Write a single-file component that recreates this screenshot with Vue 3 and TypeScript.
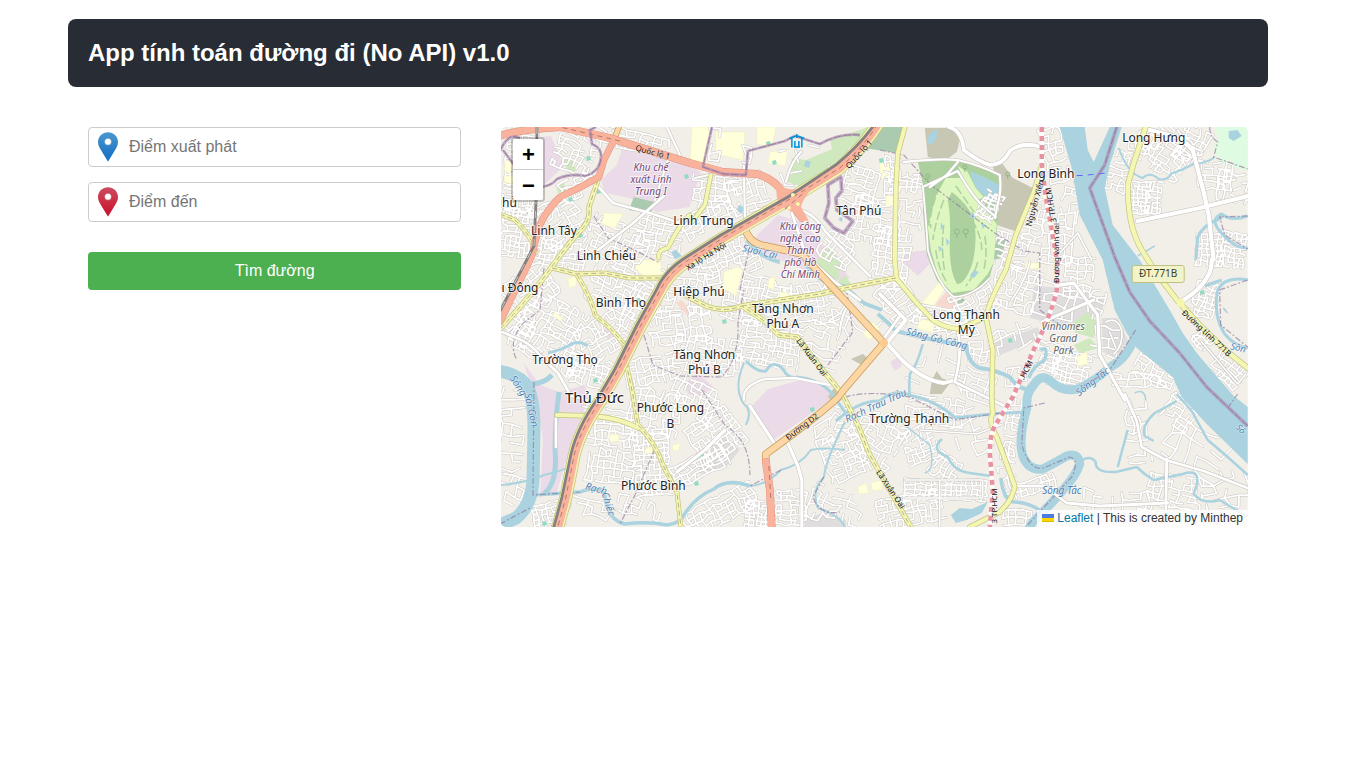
<script setup lang="ts">
import { ref } from 'vue'

interface Block { x: number; y: number; w: number; h: number; a: number; s: number; d?: number }
interface Shape { d: string; c: string }
interface Line { d: string; w: number }
interface Label { t: string; x: number; y: number; r?: number; s?: number; k?: string }

const start = ref('')
const end = ref('')

let seed = 71
const rnd = (): number => {
  seed = (seed * 16807) % 2147483647
  return seed / 2147483647
}

// Local streets: a jittered grid of short segments inside a rotated block
const streets = (b: Block): string => {
  const a = (b.a * Math.PI) / 180
  const c = Math.cos(a)
  const s = Math.sin(a)
  const keep = b.d ?? 0.76
  const nx = Math.max(1, Math.round(b.w / b.s))
  const ny = Math.max(1, Math.round(b.h / b.s))
  const pts: string[][] = []
  for (let j = 0; j <= ny; j++) {
    const row: string[] = []
    for (let i = 0; i <= nx; i++) {
      const u = (i / nx - 0.5) * b.w + (rnd() - 0.5) * b.s * 0.5
      const v = (j / ny - 0.5) * b.h + (rnd() - 0.5) * b.s * 0.5
      row.push(`${(b.x + u * c - v * s).toFixed(1)} ${(b.y + u * s + v * c).toFixed(1)}`)
    }
    pts.push(row)
  }
  let d = ''
  for (let j = 0; j <= ny; j++) {
    for (let i = 0; i <= nx; i++) {
      if (i < nx && rnd() < keep) d += `M${pts[j][i]}L${pts[j][i + 1]}`
      if (j < ny && rnd() < keep - 0.12) d += `M${pts[j][i]}L${pts[j + 1][i]}`
    }
  }
  return d
}

const blocks: Block[] = [
  { x: 520, y: 170, w: 30, h: 90, a: 5, s: 5 }, { x: 575, y: 152, w: 40, h: 42, a: 22, s: 6 },
  { x: 519, y: 232, w: 34, h: 50, a: 8, s: 5 }, { x: 560, y: 222, w: 44, h: 46, a: -30, s: 6 },
  { x: 578, y: 187, w: 34, h: 20, a: -25, s: 6 }, { x: 616, y: 245, w: 60, h: 44, a: 22, s: 6 },
  { x: 560, y: 254, w: 50, h: 26, a: 10, s: 5 }, { x: 660, y: 235, w: 44, h: 36, a: 12, s: 6 },
  { x: 633, y: 140, w: 70, h: 18, a: 14, s: 7 }, { x: 715, y: 192, w: 44, h: 32, a: 4, s: 7 },
  { x: 748, y: 195, w: 38, h: 36, a: -20, s: 7 }, { x: 715, y: 145, w: 10, h: 30, a: 5, s: 8, d: 0.5 },
  { x: 708, y: 218, w: 54, h: 22, a: -28, s: 6 }, { x: 730, y: 260, w: 56, h: 34, a: -20, s: 6 },
  { x: 530, y: 290, w: 48, h: 38, a: -35, s: 6 }, { x: 555, y: 318, w: 60, h: 36, a: 28, s: 6 },
  { x: 622, y: 292, w: 66, h: 40, a: 24, s: 6 }, { x: 602, y: 338, w: 46, h: 36, a: -30, s: 6 },
  { x: 548, y: 350, w: 78, h: 28, a: 28, s: 6 }, { x: 520, y: 330, w: 28, h: 26, a: 35, s: 6 },
  { x: 590, y: 372, w: 46, h: 28, a: 16, s: 6 }, { x: 640, y: 310, w: 28, h: 46, a: 30, s: 6 },
  { x: 686, y: 290, w: 50, h: 48, a: 4, s: 7 }, { x: 680, y: 326, w: 60, h: 34, a: -6, s: 7 },
  { x: 708, y: 355, w: 66, h: 34, a: 8, s: 6 }, { x: 756, y: 300, w: 64, h: 46, a: 12, s: 5.5 },
  { x: 770, y: 345, w: 60, h: 42, a: 10, s: 5 }, { x: 812, y: 305, w: 48, h: 40, a: -12, s: 6 },
  { x: 824, y: 345, w: 38, h: 40, a: 22, s: 8, d: 0.5 }, { x: 858, y: 320, w: 40, h: 32, a: 40, s: 12, d: 0.5 },
  { x: 650, y: 370, w: 50, h: 26, a: -12, s: 6 }, { x: 655, y: 412, w: 50, h: 42, a: 12, s: 7 },
  { x: 694, y: 398, w: 48, h: 32, a: 30, s: 6 }, { x: 610, y: 428, w: 56, h: 36, a: 5, s: 7 },
  { x: 610, y: 466, w: 46, h: 32, a: 8, s: 6, d: 0.8 }, { x: 652, y: 462, w: 34, h: 66, a: -4, s: 5, d: 0.9 },
  { x: 716, y: 436, w: 48, h: 44, a: -34, s: 5.5, d: 0.85 }, { x: 700, y: 466, w: 56, h: 22, a: -28, s: 6, d: 0.8 },
  { x: 720, y: 510, w: 76, h: 26, a: -28, s: 6, d: 0.8 }, { x: 548, y: 515, w: 30, h: 24, a: -12, s: 5 },
  { x: 590, y: 507, w: 40, h: 16, a: 14, s: 8, d: 0.6 }, { x: 640, y: 508, w: 44, h: 16, a: 15, s: 7, d: 0.6 },
  { x: 512, y: 430, w: 22, h: 80, a: 2, s: 9, d: 0.6 }, { x: 512, y: 490, w: 24, h: 28, a: 18, s: 9, d: 0.5 },
  { x: 758, y: 515, w: 24, h: 28, a: 5, s: 4 }, { x: 791, y: 508, w: 30, h: 34, a: 2, s: 5, d: 0.85 },
  { x: 835, y: 508, w: 52, h: 34, a: 20, s: 7, d: 0.5 }, { x: 844, y: 455, w: 40, h: 46, a: -22, s: 6 },
  { x: 880, y: 442, w: 38, h: 48, a: 28, s: 6 }, { x: 850, y: 422, w: 36, h: 22, a: 20, s: 7 },
  { x: 920, y: 445, w: 32, h: 34, a: -22, s: 5 }, { x: 935, y: 410, w: 56, h: 26, a: 8, s: 7 },
  { x: 945, y: 468, w: 28, h: 24, a: 35, s: 6 }, { x: 946, y: 490, w: 82, h: 20, a: 1, s: 5, d: 0.9 },
  { x: 910, y: 510, w: 66, h: 30, a: -10, s: 6 }, { x: 970, y: 433, w: 28, h: 44, a: -25, s: 10, d: 0.5 },
  { x: 892, y: 180, w: 14, h: 46, a: 3, s: 5 }, { x: 907, y: 182, w: 32, h: 18, a: 7, s: 5 },
  { x: 891, y: 258, w: 36, h: 60, a: 8, s: 6 }, { x: 910, y: 215, w: 20, h: 28, a: 3, s: 6, d: 0.5 },
  { x: 860, y: 186, w: 34, h: 36, a: 15, s: 6 }, { x: 872, y: 220, w: 42, h: 44, a: 10, s: 6 },
  { x: 900, y: 302, w: 32, h: 44, a: -38, s: 6 }, { x: 940, y: 318, w: 50, h: 20, a: 10, s: 6 },
  { x: 973, y: 300, w: 42, h: 40, a: -30, s: 5.5 }, { x: 955, y: 330, w: 44, h: 18, a: -14, s: 6 },
  { x: 1010, y: 250, w: 34, h: 32, a: 14, s: 6 },
  { x: 1016, y: 288, w: 44, h: 44, a: 18, s: 6 }, { x: 1035, y: 220, w: 18, h: 44, a: 10, s: 6 },
  { x: 1055, y: 155, w: 20, h: 54, a: -12, s: 7 }, { x: 1057, y: 238, w: 30, h: 52, a: 5, s: 7 },
  { x: 1078, y: 278, w: 28, h: 40, a: 5, s: 7 }, { x: 1008, y: 340, w: 54, h: 22, a: -22, s: 7, d: 0.4 },
  { x: 1056, y: 300, w: 42, h: 32, a: 14, s: 10 }, { x: 1070, y: 370, w: 36, h: 36, a: 14, s: 5, d: 0.85 },
  { x: 1049, y: 357, w: 24, h: 28, a: 10, s: 5 }, { x: 1106, y: 342, w: 26, h: 30, a: 8, s: 9, d: 0.6 },
  { x: 975, y: 385, w: 38, h: 28, a: 20, s: 8, d: 0.6 }, { x: 935, y: 365, w: 48, h: 38, a: 14, s: 11, d: 0.35 },
  { x: 978, y: 352, w: 18, h: 20, a: 5, s: 6 }, { x: 1016, y: 377, w: 20, h: 20, a: 0, s: 6 },
  { x: 1145, y: 142, w: 28, h: 22, a: 17, s: 7 }, { x: 1168, y: 152, w: 46, h: 44, a: 35, s: 5.5 },
  { x: 1192, y: 145, w: 28, h: 34, a: 25, s: 6 }, { x: 1118, y: 171, w: 20, h: 40, a: 12, s: 6 },
  { x: 1140, y: 198, w: 20, h: 32, a: 3, s: 4, d: 0.9 }, { x: 1155, y: 200, w: 14, h: 36, a: 5, s: 5, d: 0.85 },
  { x: 1216, y: 176, w: 32, h: 26, a: 5, s: 6, d: 0.85 }, { x: 1233, y: 188, w: 30, h: 28, a: 12, s: 8 },
  { x: 1210, y: 250, w: 26, h: 32, a: 3, s: 5, d: 0.9 }, { x: 1233, y: 250, w: 24, h: 34, a: 8, s: 5, d: 0.9 },
  { x: 1206, y: 300, w: 24, h: 34, a: 18, s: 5, d: 0.85 }, { x: 1228, y: 370, w: 34, h: 24, a: 40, s: 6, d: 0.9 },
  { x: 1202, y: 341, w: 18, h: 14, a: 40, s: 5, d: 0.9 },
  { x: 1156, y: 370, w: 42, h: 22, a: 28, s: 6 }, { x: 1140, y: 380, w: 54, h: 12, a: 2, s: 8 },
  { x: 1138, y: 432, w: 20, h: 62, a: -6, s: 8, d: 0.6 }, { x: 1180, y: 412, w: 30, h: 28, a: 35, s: 6, d: 0.6 },
  { x: 1195, y: 450, w: 60, h: 40, a: 28, s: 12, d: 0.65 }, { x: 1175, y: 495, w: 54, h: 38, a: 8, s: 6, d: 0.6 },
  { x: 1225, y: 490, w: 44, h: 36, a: -15, s: 10, d: 0.6 }, { x: 1112, y: 503, w: 72, h: 24, a: 3, s: 9, d: 0.5 },
  { x: 1012, y: 430, w: 12, h: 62, a: 8, s: 6 }, { x: 1035, y: 486, w: 42, h: 14, a: -18, s: 6 },
  { x: 1006, y: 472, w: 16, h: 44, a: -18, s: 8, d: 0.5 }, { x: 1018, y: 518, w: 30, h: 14, a: 0, s: 6 },
  { x: 1070, y: 205, w: 16, h: 46, a: 10, s: 7, d: 0.5 }, { x: 1096, y: 305, w: 14, h: 28, a: 15, s: 6 },
  { x: 805, y: 165, w: 50, h: 34, a: -10, s: 10, d: 0.3 }, { x: 750, y: 160, w: 14, h: 28, a: 8, s: 9, d: 0.45 },
  { x: 838, y: 250, w: 34, h: 28, a: 35, s: 6 }, { x: 827, y: 430, w: 22, h: 40, a: -30, s: 11, d: 0.4 },
]
const localStreets = blocks.map(streets).join('')
const clubStreets = streets({ x: 990, y: 206, w: 18, h: 28, a: 28, s: 4 })

const areas: Shape[] = [
  { c: 'industrial', d: 'M623 145L690 162V207L657 212L630 198L605 193L601 180L617 165Z' },
  { c: 'industrial', d: 'M541 137L551 136L564 166L543 186Z' },
  { c: 'industrial', d: 'M690 166L701 172L690 206Z' },
  { c: 'industrial', d: 'M757 235L778 215L803 222L838 262L850 278L838 281L800 268L757 250Z' },
  { c: 'industrial', d: 'M752 406L768 389L800 380L828 384L831 400L772 441Z' },
  { c: 'industrial', d: 'M523 362L540 385L560 392L585 385L588 400L569 450L557 492L540 497L543 440L537 400Z' },
  { c: 'industrial', d: 'M903 253L928 250L932 262L918 276L903 262Z' },
  { c: 'industrial', d: 'M684 383L698 374L713 386L702 397L688 394Z' },
  { c: 'industrial', d: 'M606 326L615 330L609 340L603 334Z' },
  { c: 'industrial', d: 'M890 362L900 356L902 366L895 371Z' },
  { c: 'grey', d: 'M1034 286L1078 289L1104 300L1102 315L1062 325L1030 318Z' },
  { c: 'grey', d: 'M1102 318L1118 318L1128 340L1118 357L1103 352Z' },
  { c: 'grey', d: 'M700 462L722 436L740 450L725 468L700 474Z' },
  { c: 'grey', d: 'M806 519L826 512L846 520V527H803Z' },
  { c: 'grey', d: 'M994 342L1038 327L1042 338L998 356Z' },
  { c: 'brown', d: 'M925 128L952 128L960 140L957 152L945 161L928 157Z' },
  { c: 'brown', d: 'M993 167L1003 164L1013 178L1033 188L1027 212L1018 232L997 225L1001 190Z' },
  { c: 'brown', d: 'M851 359L863 354L868 358L862 365Z' },
  { c: 'brown', d: 'M932 380L937 371L942 378L951 382L942 394L930 394Z' },
  { c: 'brown', d: 'M828 397L836 385L842 400L835 404Z' },
  { c: 'wood', d: 'M880 127L904 127L898 153L864 148Z' },
  { c: 'wood', d: 'M629 210L634 197L654 202L651 213Z' },
  { c: 'wood', d: 'M995 235L1006 240L1002 258L993 260Z' },
  { c: 'wood', d: 'M956 302L963 298L967 302L960 306Z' },
  { c: 'park', d: 'M788 182L792 158L806 160L830 150L850 143L845 163L812 190Z' },
  { c: 'park', d: 'M830 140L860 130L868 127L862 142L834 156Z' },
  { c: 'park', d: 'M815 262L829 247L842 262L838 280L828 277Z' },
  { c: 'park', d: 'M564 160L572 158L576 171L568 173Z' },
  { c: 'park', d: 'M556 184L564 182L566 192L558 193Z' },
  { c: 'park', d: 'M835 285L845 275L852 285L846 294Z' },
  { c: 'park', d: 'M1070 325L1088 312L1098 322L1094 338L1076 333Z' },
  { c: 'park', d: 'M1074 345L1090 338L1100 348L1080 353Z' },
  { c: 'mint', d: 'M1215 127L1248 127V171L1222 164L1213 150L1218 140Z' },
  { c: 'school', d: 'M692 127H712L706 168L690 164Z' },
  { c: 'school', d: 'M716 132H745L743 160L716 154Z' },
  { c: 'school', d: 'M757 127H776L772 148L757 144Z' },
  { c: 'school', d: 'M770 152L788 150L785 166L768 163Z' },
  { c: 'school', d: 'M637 260H659L664 274L645 277L636 270Z' },
  { c: 'school', d: 'M880 163H891V175L880 179Z' },
  { c: 'school', d: 'M922 303L944 276L948 284L934 306Z' },
  { c: 'salmon', d: 'M935 305L948 290L956 302L954 310Z' },
  { c: 'salmon', d: 'M676 303L682 300L690 310L688 316Z' },
]
const schools = [
  'M724 272L738 267L743 270L736 296L723 288Z', 'M604 213L623 214L615 228L602 224Z', 'M917 328L921 319L935 322L933 333Z',
  'M568 278L577 276L576 286L569 288Z', 'M780 292L789 293L788 300L779 299Z', 'M863 334L873 322L880 329L870 340Z',
  'M506 160L514 162L510 174L504 170Z', 'M505 176L515 175L512 184L504 182Z', 'M1025 263L1041 263L1040 268L1026 269Z',
  'M645 449L653 446L652 453L645 454Z', 'M672 446L680 443L679 451L673 450Z', 'M609 435L618 434L619 441L610 442Z',
  'M858 487L866 483L869 493L859 494Z', 'M871 483L882 480L883 489L873 491Z', 'M1077 357L1087 352L1088 364L1078 366Z',
  'M886 196H898V205L886 206Z', 'M769 279L775 277L774 289L768 288Z', 'M555 312l8 6-3 3-7-6z',
]
const spots: Shape[] = [
  [588, 159], [598, 192], [580, 236], [686, 177], [684, 261], [724, 322], [812, 410], [664, 407], [696, 484], [701, 455],
  [544, 524], [974, 188], [881, 161], [1202, 293], [768, 144], [774, 163], [595, 381], [570, 200], [638, 301], [1010, 341],
].map(([x, y]) => ({ c: 'teal', d: `M${x - 2} ${y - 2}l4 -1 1 4 -4 1z` }))

const fairways = [
  'M940 186Q932 205 929 226', 'M944 200Q936 220 933 240', 'M944 225Q941 250 945 272', 'M936 250Q938 268 948 284',
  'M972 220Q982 236 982 250', 'M985 236Q988 252 984 270', 'M978 262Q974 276 966 286', 'M956 186Q966 200 974 212',
]
const ponds = [
  'M970 171L982 176L1000 185L998 200L993 203L984 195L976 188Z',
  'M929 135L937 129L938 136L932 145L927 143Z',
  'M1229 131L1238 130L1242 136L1234 141L1229 138Z',
  'M972 212l4 3-2 4-5-2zM981 222l5 3-3 4zM941 222l3 5-3 3zM946 238l4 4-3 4zM938 246l5 2-3 4zM974 270l5 2-5 6-4-2z',
  'M739 205L744 207L742 214L737 210ZM671 252L676 250L682 256L675 259Z',
  'M951 515L960 508L972 509L988 502L982 513L967 520L956 523Z',
  'M806 160l5 2-2 6-5-2zM840 217l3 1-1 4-3-2z',
]
const rivers = [
  'M1060 127L1072 168L1080 215L1103 260L1115 310L1127 333L1137 348L1173 377L1182 397L1207 424L1248 464V407L1233 395L1197 353L1183 333L1170 310L1140 260L1113 225L1105 188L1110 165L1122 127H1110L1094 162L1088 150L1085 127Z',
]
const streams: Line[] = [
  { w: 9, d: 'M1136 334Q1128 358 1112 366Q1094 382 1078 389Q1062 392 1052 382Q1042 372 1034 385Q1026 392 1027 408Q1018 440 1023 456Q1029 471 1043 469Q1053 464 1067 456Q1079 452 1080 464Q1076 476 1063 490Q1048 508 1033 522L1028 530' },
  { w: 13, d: 'M498 371Q520 374 528 388Q534 400 534 430L533 482Q531 506 516 518L496 527' },
  { w: 5, d: 'M530 384Q544 384 552 375M559 392Q555 420 555 450Q558 482 544 494' },
  { w: 3.5, d: 'M533 495L580 492Q600 485 605 495Q607 520 625 524Q648 521 667 525Q680 524 686 512Q697 496 714 489Q727 478 750 486' },
  { w: 4, d: 'M878 314Q890 324 896 331L925 338L966 346Q969 364 980 368Q996 370 1010 377Q1020 391 1031 389' },
  { w: 4, d: 'M747 240Q760 258 780 262M806 265Q824 287 845 286Q858 300 866 304L882 310' },
  { w: 3, d: 'M746 361Q758 373 766 371Q773 359 783 369Q789 380 797 377Q817 379 829 390Q839 403 845 412' },
  { w: 2, d: 'M744 363Q733 388 744 404Q753 411 746 425M845 422Q826 460 824 477Q811 490 818 508Q840 515 845 527' },
  { w: 2, d: 'M501 485Q530 482 544 475Q570 469 570 464M845 450Q824 447 811 450Q801 465 781 470Q767 485 750 486' },
  { w: 3, d: 'M836 421Q860 400 880 401Q895 388 910 395Q935 400 956 418Q980 414 1027 412' },
  { w: 2.5, d: 'M923 344Q916 368 910 374Q909 388 910 397M942 439Q930 450 948 457Q954 471 970 473L991 476' },
  { w: 3, d: 'M548 353Q561 350 568 346Q578 339 588 346' },
  { w: 2, d: 'M1119 148Q1128 174 1143 178Q1150 171 1159 179Q1168 181 1171 174Q1183 170 1194 164Q1208 163 1215 157' },
  { w: 3, d: 'M1248 216Q1232 222 1222 214Q1210 219 1220 231Q1235 249 1248 248M1222 218Q1204 224 1198 237L1196 260' },
  { w: 3, d: 'M1248 280Q1225 276 1218 290Q1213 315 1225 334Q1235 346 1248 348M1205 286L1222 280' },
  { w: 2.5, d: 'M1080 462Q1090 454 1096 462Q1095 473 1116 472L1137 467Q1145 475 1154 480L1183 474Q1205 467 1194 494Q1203 505 1220 500L1248 517' },
  { w: 2.5, d: 'M1177 394L1192 411L1208 440Q1225 454 1248 475M1177 401Q1165 408 1155 413Q1141 426 1145 436L1154 441M1128 430Q1120 459 1118 467' },
  { w: 3.5, d: 'M1001 478Q1004 502 1015 502Q1030 503 1043 512M1041 350Q1049 345 1045 360Q1034 365 1029 378' },
  { w: 1.5, d: 'M1138 256L1155 246M1135 393Q1145 388 1146 400M1226 310Q1221 306 1228 313M897 419L930 445Q936 470 925 473' },
]
const minor: Line[] = [
  { w: 4, d: 'M949 127Q962 130 964 150Q978 161 990 165Q1003 165 1010 151Q1022 141 1041 147' },
  { w: 2.5, d: 'M904 162Q940 158 958 160Q980 165 1000 175Q1002 190 998 204L995 218M930 187Q940 180 947 175L958 162M925 186L958 171Q970 192 980 203L996 217' },
  { w: 2, d: 'M923 186Q927 228 928 250Q938 285 954 297Q974 296 990 278' },
  { w: 4.5, d: 'M1138 221L1200 208L1248 196M1146 129L1180 138L1193 150L1204 192L1209 215L1214 260' },
  { w: 4.5, d: 'M1184 300Q1201 289 1207 278Q1212 271 1212 260' },
  { w: 4, d: 'M878 333L903 361Q925 381 944 383L952 381M888 342L906 320L880 294' },
  { w: 3, d: 'M958 330Q963 352 955 382L980 394L1009 408M900 316L880 344M860 300L835 282L806 255L792 213' },
  { w: 3, d: 'M500 331L514 337Q532 343 542 358L558 373L571 396L587 400M556 418V447' },
  { w: 3.5, d: 'M1042 322L1094 300M1060 285L1074 283L1098 315L1100 355L1125 400' },
  { w: 3, d: 'M1125 394L1137 421L1142 447L1166 460L1204 471L1248 488M1015 486H1045L1067 503L1100 506L1168 503M1167 459L1166 524' },
  { w: 3.5, d: 'M788 443L798 466L802 480L802 527M750 406L775 444M677 472L705 450L725 430' },
  { w: 2.5, d: 'M744 166L745 218L754 224M786 182Q791 162 801 152M695 178L718 173M667 127L680 155L668 160L655 200' },
  { w: 3, d: 'M597 185L613 203L650 213L680 223M598 250L632 224L664 196' },
  { w: 3, d: 'M800 210Q815 214 826 232L846 252L870 276' },
  { w: 2.5, d: 'M744 400Q742 386 765 379L795 378L830 385M840 330Q843 310 849 306' },
  { w: 1.8, d: 'M905 480H983V498H905M940 480V527M920 430L977 434L1003 424' },
  { w: 2, d: 'M1178 130Q1188 148 1203 151M1061 252L1078 233L1092 260M1012 300Q1026 280 1030 262' },
  { w: 2, d: 'M1106 322Q1117 316 1122 330Q1124 345 1114 354M1110 332L1116 348M1202 342L1238 384L1246 374' },
]
const yellow: Line[] = [
  { w: 4, d: 'M905 127L898 153L896 190L895 262L897 279L917 303L933 320Q945 328 960 329L986 317Q990 300 1006 270L1016 235L1034 192L1042 165' },
  { w: 4, d: 'M986 317L993 350L992 395L993 414Q988 420 997 437L1015 486Q1013 500 1000 512L970 527' },
  { w: 4.5, d: 'M1146 127L1134 163L1128 185Q1128 205 1131 220Q1134 236 1142 250L1158 275L1178 301L1200 325L1228 352L1248 368' },
  { w: 4, d: 'M687 296L706 306Q724 313 742 306L766 322L779 335L797 337L815 360L843 395L858 425L870 455L890 490L911 527' },
  { w: 4, d: 'M742 306Q780 300 820 294L845 288L896 278' },
  { w: 4, d: 'M598 180L589 207Q591 222 579 232Q565 248 548 272Q530 297 500 329' },
  { w: 3.5, d: 'M500 214L515 220Q531 235 536 252M552 268L577 274L604 273L630 278L663 278' },
  { w: 3.5, d: 'M577 275Q592 300 595 315L610 328L624 344L627 367L633 395L638 425Q655 442 663 465L677 492L681 527' },
  { w: 4, d: 'M557 415L593 416Q620 418 638 428' },
  { w: 3.5, d: 'M711 175L705 205L692 222M690 215Q681 222 668 248Q657 250 659 258' },
]
const orange: Line[] = [
  { w: 6, d: 'M745 229Q750 244 766 246L802 254L884 343L842 392Q840 400 766 454L766 461' },
  { w: 4.5, d: 'M619 127L614 140' },
]
const trunk: Line[] = [
  { w: 7, d: 'M500 136Q515 130 560 127L610 138L690 163L723 172L757 174Q775 179 784 194L802 218' },
  { w: 6, d: 'M613 142L604 160L599 177Q580 188 560 197Q541 216 537 234L532 256L500 322' },
  { w: 7, d: 'M766 462L770 490L772 530' },
]
const highway = 'M878 124Q865 145 840 168L790 199L723 238L690 259Q669 272 660 291L640 327L618 371L601 400Q580 430 574 456L566 497L557 530'
const rail = 'M875 124Q860 145 836 165L788 197L721 235L688 256Q665 270 657 289L637 325L615 369L598 398Q577 428 571 454L562 497L553 530'
const westRail = 'M537 127L536 202L534 246Q523 267 500 311'
const ring = 'M1042 127V165L1046 197L1052 230L1058 265L1057 290Q1051 316 1036 345L1013 397L995 426Q988 440 991 465L993 491L990 527'
const bounds: Line[] = [
  { w: 2, d: 'M500 151Q508 132 520 138M503 150L514 165L535 188Q551 187 557 179Q570 173 585 176Q600 172 601 157Q602 148 592 144L590 130L596 127' },
  { w: 2, d: 'M712 127L703 167L724 174L746 175L748 151L785 141L795 136L820 144Q840 133 860 135' },
  { w: 3, d: 'M828 185L841 177L842 191L836 198L837 210L853 221L844 233L834 228L825 218L829 203Z' },
  { w: 2.8, d: 'M1117 127L1105 165L1090 188L1115 257L1130 292L1150 321L1180 353L1207 387L1248 426' },
]
const dashes = [
  'M880 150L904 155L930 184L995 233L1024 251L1040 253L1040 310L1060 325M594 216L608 238L630 248L660 263',
  'M544 268L540 310L521 325Q508 345 517 360M644 335L653 365L680 376L722 377Q740 357 738 321L744 290',
  'M846 285L853 332L828 365M702 390L725 425Q750 440 750 475M740 290L749 250M655 449L635 495L620 524',
  'M534 382L533 495L580 492M500 524L530 508M1136 330L1110 370L1080 388M1045 403L1024 408L1022 445Q1031 474 1046 467L1070 457Q1080 460 1072 477L1028 525',
  'M1210 127Q1210 137 1218 142L1214 157L1248 169M1248 216L1220 217L1225 235L1248 249M1248 280L1220 290L1221 325L1248 347M1228 408L1238 394',
  'M845 397Q870 390 910 397L955 420L1000 413M824 477L813 497Q820 516 840 512M781 470L750 486',
]

const labels: Label[] = [
  { t: 'hủ', x: 509.5, y: 207 }, { t: 'Linh Tây', x: 554, y: 235 }, { t: 'Linh Chiểu', x: 606.5, y: 260.5 },
  { t: 'Linh Trung', x: 703.5, y: 225 }, { t: 'ı Đông', x: 520, y: 292 }, { t: 'Bình Thọ', x: 621, y: 307 },
  { t: 'Hiệp Phú', x: 699, y: 296.5 }, { t: 'Tăng Nhơn', x: 783, y: 313 }, { t: 'Phú A', x: 783, y: 328 },
  { t: 'Tăng Nhơn', x: 704.5, y: 359 }, { t: 'Phú B', x: 704.5, y: 374 }, { t: 'Trường Thọ', x: 565, y: 364 },
  { t: 'Thủ Đức', x: 594.5, y: 403, s: 15 }, { t: 'Phước Long', x: 670.5, y: 412.5 }, { t: 'B', x: 670.5, y: 428 },
  { t: 'Phước Bình', x: 653.5, y: 490 }, { t: 'Trường Thạnh', x: 909.5, y: 423 }, { t: 'Tân Phú', x: 859, y: 215.5 },
  { t: 'Long Thạnh', x: 966.5, y: 319 }, { t: 'Mỹ', x: 966.5, y: 334 }, { t: 'Long Bình', x: 1046, y: 178.5 },
  { t: 'Long Hưng', x: 1154, y: 142.5 },
  { t: 'Khu chế', x: 651, y: 171, s: 10, k: 'zone' }, { t: 'xuất Linh', x: 651, y: 183, s: 10, k: 'zone' },
  { t: 'Trung I', x: 651, y: 195, s: 10, k: 'zone' }, { t: 'Khu công', x: 800.5, y: 230.5, s: 10, k: 'zone' },
  { t: 'nghệ cao', x: 800.5, y: 242.5, s: 10, k: 'zone' }, { t: 'Thành', x: 800.5, y: 254.5, s: 10, k: 'zone' },
  { t: 'phố Hồ', x: 800.5, y: 266.5, s: 10, k: 'zone' }, { t: 'Chí Minh', x: 800.5, y: 278, s: 10, k: 'zone' },
  { t: 'Vinhomes', x: 1063.5, y: 330, s: 10, k: 'estate' }, { t: 'Grand', x: 1063.5, y: 342, s: 10, k: 'estate' },
  { t: 'Park', x: 1063.5, y: 354, s: 10, k: 'estate' },
  { t: 'Suối Cái', x: 760, y: 255, r: 13, s: 10, k: 'river' }, { t: 'Sông Gò Công', x: 937, y: 342, r: 14, s: 10, k: 'river' },
  { t: 'Rạch Trau Trảu', x: 876, y: 409, r: -25, s: 10, k: 'river' }, { t: 'Sông Tắc', x: 1093, y: 385, r: -38, s: 10, k: 'river' },
  { t: 'Sông Tắc', x: 1062, y: 494, s: 10, k: 'river' }, { t: 'Sông', x: 518, y: 389, r: 57, s: 10, k: 'river' },
  { t: 'Sài Gòn', x: 531, y: 413, r: 78, s: 10, k: 'river' }, { t: 'Rạch', x: 596, y: 492, r: 14, s: 10, k: 'river' },
  { t: 'Chiếc', x: 608, y: 507, r: 72, s: 10, k: 'river' }, { t: 'Sôn', x: 1238.5, y: 351, r: 12, s: 9.5, k: 'river' },
  { t: 'Sô', x: 1241, y: 432, r: 45, s: 9, k: 'river' },
  { t: 'Quốc lộ 1', x: 653, y: 155, r: 15, s: 8, k: 'road' }, { t: 'Quốc lộ 1', x: 859, y: 157, r: -48, s: 8, k: 'road' },
  { t: 'Xa lộ Hà Nội', x: 706, y: 259, r: -32, s: 8, k: 'road' }, { t: 'Lã Xuân Oai', x: 812, y: 360, r: 53, s: 8, k: 'road' },
  { t: 'Lã Xuân Oai', x: 891, y: 492, r: 56, s: 8, k: 'road' }, { t: 'Đường D2', x: 802, y: 429.5, r: -37, s: 8, k: 'road' },
  { t: 'Nguyễn Xiển', x: 1035, y: 206, r: -74, s: 8, k: 'road' }, { t: '3 TP.HCM', x: 1051, y: 208, r: -99, s: 8, k: 'road' },
  { t: 'Đường vành đai', x: 1056, y: 256, r: -90, s: 8, k: 'road' }, { t: '.HCM', x: 1026, y: 373, r: -62, s: 8, k: 'road' },
  { t: '3 TP.HCM', x: 994, y: 509, r: -90, s: 8, k: 'road' }, { t: 'Đường tỉnh 771B', x: 1207, y: 336, r: 43, s: 8, k: 'road' },
]
</script>

<template>
  <main class="page">
    <header class="header"><h1>App tính toán đường đi (No API) v1.0</h1></header>
    <div class="content">
      <form class="form" @submit.prevent>
        <div class="field">
          <svg class="pin" viewBox="0 0 20 30">
            <defs><linearGradient id="blue" x2="0" y2="1"><stop stop-color="#4a98cf" /><stop offset=".8" stop-color="#1e74c5" /></linearGradient></defs>
            <path fill="url(#blue)" d="M10 .3C4.400.3 0 4.700 0 10c0 3 1.200 5 2.600 7.500L9.400 28.800Q10 29.900 10.600 28.800L17.400 17.500C18.800 15 20 13 20 10 20 4.700 15.600.3 10 .3Z" />
            <circle cx="10" cy="9.700" r="3.500" fill="#fff" stroke="#3179b8" stroke-opacity=".5" />
          </svg>
          <input v-model="start" type="text" placeholder="Điểm xuất phát">
        </div>
        <div class="field">
          <svg class="pin" viewBox="0 0 20 30">
            <defs><linearGradient id="red" x2="0" y2="1"><stop stop-color="#cd4b60" /><stop offset=".8" stop-color="#ca1a32" /></linearGradient></defs>
            <path fill="url(#red)" d="M10 .3C4.400.3 0 4.700 0 10c0 3 1.200 5 2.600 7.500L9.400 28.800Q10 29.900 10.600 28.800L17.400 17.500C18.800 15 20 13 20 10 20 4.700 15.600.3 10 .3Z" />
            <circle cx="10" cy="9.700" r="3.500" fill="#fff" stroke="#a92a3e" stroke-opacity=".5" />
          </svg>
          <input v-model="end" type="text" placeholder="Điểm đến">
        </div>
        <button class="submit" type="submit">Tìm đường</button>
      </form>

      <section class="map">
        <svg class="tiles" viewBox="501 127 747 400" preserveAspectRatio="none">
          <rect x="501" y="127" width="747" height="400" fill="#f2efe9" />
          <path v-for="(a, i) in areas" :key="'a' + i" :d="a.d" :class="a.c" />
          <path class="street-case" :d="localStreets" />
          <path class="street" :d="localStreets" />
          <path v-for="(d, i) in schools" :key="'sc' + i" :d="d" class="school" />
          <path v-for="(a, i) in spots" :key="'s' + i" :d="a.d" :class="a.c" />
          <path class="golf" d="M918 162L958 160L1002 175L1000 205L997 230L994 262L990 277L975 292L960 297L950 295L937 280L927 255L923 210L924 188Z" />
          <path class="links" d="M946 178L962 178Q972 200 984 208L997 224L994 262L988 274L974 290L952 293L939 278L931 250L928 226L936 196Z" />
          <path class="golf" d="M952 192Q966 202 974 218Q978 240 973 262Q966 284 957 284Q949 270 950 240Q951 215 948 200Z" />
          <path v-for="(d, i) in fairways" :key="'f' + i" :d="d" class="rough" />
          <path class="links" d="M958 166L968 172L976 188L984 197L978 200L966 184Z" />
          <g class="tree">
            <path d="M957 238v-4M966 238v-4" /><circle cx="957" cy="231.500" r="2.500" /><circle cx="966" cy="231.500" r="2.500" />
            <path d="M928 182v-4M965 172v-4M1008 179v-4M931 228v-4" /><circle cx="928" cy="176" r="2" /><circle cx="965" cy="167" r="2" /><circle cx="1008" cy="174" r="2" />
          </g>
          <path v-for="(s, i) in streams" :key="'w' + i" :d="s.d" class="stream" :stroke-width="s.w" />
          <path v-for="(d, i) in rivers" :key="'r' + i" :d="d" class="water" />
          <path v-for="(d, i) in ponds" :key="'p' + i" :d="d" class="water" />
          <path class="street-case" :d="clubStreets" />
          <path class="street" :d="clubStreets" />
          <path v-for="(d, i) in dashes" :key="'d' + i" :d="d" class="dash" />

          <path v-for="(r, i) in minor" :key="'mc' + i" :d="r.d" class="line minor-case" :stroke-width="r.w + 0.8" />
          <path v-for="(r, i) in minor" :key="'m' + i" :d="r.d" class="line white" :stroke-width="r.w - 0.2" />
          <path v-for="(r, i) in yellow" :key="'yc' + i" :d="r.d" class="line yellow-case" :stroke-width="r.w + 1.4" />
          <path v-for="(r, i) in yellow" :key="'y' + i" :d="r.d" class="line yellow" :stroke-width="r.w" />
          <path v-for="(r, i) in yellow.slice(3, 8)" :key="'yd' + i" :d="r.d" class="center-dash" />
          <path v-for="(r, i) in orange" :key="'oc' + i" :d="r.d" class="line orange-case" :stroke-width="r.w + 1.5" />
          <path v-for="(r, i) in orange" :key="'o' + i" :d="r.d" class="line orange" :stroke-width="r.w" />
          <path v-for="(r, i) in trunk" :key="'tc' + i" :d="r.d" class="line trunk-case" :stroke-width="r.w + 0.8" />
          <path v-for="(r, i) in trunk" :key="'t' + i" :d="r.d" class="line trunk" :stroke-width="r.w" />

          <path :d="highway" class="line yellow-case" stroke-width="13" />
          <path :d="highway" class="line yellow" stroke-width="11.500" />
          <path :d="highway" class="line trunk" stroke-width="8.500" />
          <path class="trunk" d="M776 184Q790 193 806 187L818 181Q803 198 801 207Q808 218 810 224Q800 214 788 210Q779 205 777 198Z" />
          <path :d="rail" class="rail" />
          <path :d="highway" class="dark-dash" />
          <path :d="westRail" class="rail" />
          <path :d="westRail" class="rail-core" />
          <circle cx="793" cy="195" r="2" class="yellow" /><circle cx="798" cy="204" r="2" class="yellow" />
          <circle cx="789" cy="208" r="2" class="yellow" />
          <path d="M785 209L806 191" class="dark-dash" />
          <path d="M620 141L560 127M769 466L771 500" class="dark-dash" />
          <circle cx="884" cy="343" r="4" class="orange" />
          <circle cx="1181" cy="303" r="4" class="yellow" />
          <path :d="ring" class="ring-base" />
          <path :d="ring" class="ring" />

          <g v-for="(b, i) in bounds" :key="'b' + i">
            <path :d="b.d" class="bound" :stroke-width="b.w + 0.8" />
            <path :d="b.d" class="bound-core" />
          </g>
          <path class="ferry" d="M1077 175.500h6M1088 175l18-2" />
          <path class="hospital" d="M789.500 138.500L797 135.500L804.500 138.500M792 138V147.500M802 138V147.500M795 148V141M799 141V148M797 134V138M795.500 147H800" />

          <rect x="1132.500" y="265.500" width="52" height="17" rx="2" class="shield" />
          <text x="1158.500" y="277.500" font-size="10" text-anchor="middle" class="ref">ĐT.771B</text>
          <text
            v-for="(l, i) in labels" :key="'l' + i" :x="l.x" :y="l.y" :font-size="l.s ?? 12"
            :class="['label', l.k]" :transform="l.r ? `rotate(${l.r} ${l.x} ${l.y - 3})` : undefined"
          >{{ l.t }}</text>
        </svg>
        <div class="zoom">
          <button type="button" aria-label="Zoom in">+</button>
          <button type="button" aria-label="Zoom out">−</button>
        </div>
        <div class="attribution">
          <svg class="flag" viewBox="0 0 12 8"><path fill="#4c7be1" d="M0 0h12v4H0z" /><path fill="#ffd500" d="M0 4h12v3H0z" /><path fill="#e0bc00" d="M0 7h12v1H0z" /></svg>
          <a>Leaflet</a> | This is created by Minthep
        </div>
      </section>
    </div>
  </main>
</template>

<style>
body { background: #fff; }
</style>

<style scoped>
.page, .page * { box-sizing: border-box; }
.page { width: 1200px; margin-left: 68px; padding-top: 19px; font-family: "Liberation Sans", Arial, sans-serif; }
.header { height: 68px; padding: 20px; border-radius: 8px; background: #282c34; color: #fff; }
.header h1 { margin: 0; font-size: 24px; line-height: 28px; font-weight: 700; }
.content { display: flex; gap: 40px; padding: 40px 20px; }
.form { flex: 1 1 0; display: flex; flex-direction: column; gap: 15px; }
.field { position: relative; height: 40px; }
.pin { position: absolute; left: 10px; top: 5px; width: 20px; height: 30px; }
.field input { display: block; width: 100%; height: 40px; padding: 0 10px 0 40px; border: 1px solid #ccc; border-radius: 4px; outline: 0; font: 16px "Liberation Sans", Arial, sans-serif; }
.field input::placeholder { color: #757575; opacity: 1; }
.submit { height: 38px; margin-top: 15px; padding: 0; border: 0; border-radius: 4px; background: #4caf50; color: #fff; font: 16px "Liberation Sans", Arial, sans-serif; }
.map { position: relative; flex: 2 1 0; height: 400px; border-radius: 5px; overflow: hidden; }
.tiles { display: block; width: 100%; height: 100%; }
.zoom { position: absolute; left: 10px; top: 10px; border: 2px solid rgba(0, 0, 0, .2); border-radius: 4px; background-clip: padding-box; }
.zoom button { display: block; width: 30px; height: 30px; padding: 1px 0 0; border: 0; background: #fff; color: #000; font: bold 22px/29px "Liberation Sans", sans-serif; }
.zoom button:first-child { height: 31px; border-bottom: 1px solid #ccc; border-radius: 2px 2px 0 0; }
.zoom button:last-child { border-radius: 0 0 2px 2px; }
.attribution { position: absolute; right: 0; bottom: 0; padding: 0 5px; background: rgba(255, 255, 255, .8); color: #333; font-size: 12px; line-height: 16.800px; white-space: nowrap; }
.attribution a { color: #0078a8; }
.flag { width: 12px; height: 8px; margin-right: 3px; }

.industrial { fill: #ebdbe8; }
.grey { fill: #dfdddd; }
.brown { fill: #c7c7b4; }
.wood { fill: #aacbaf; }
.park { fill: #cfe8bd; }
.mint { fill: #dffce2; }
.school { fill: #ffffdc; stroke: #f0ecb0; stroke-width: .4; }
.salmon { fill: #f7d9cf; }
.teal { fill: #8fdcc4; }
.golf { fill: #add19e; }
.links { fill: #def6c0; }
.rough { fill: none; stroke: #add19e; stroke-width: 1.500; stroke-dasharray: 9 3; }
.tree { fill: none; stroke: #87b080; stroke-width: .8; }
.water { fill: #aad3df; }
.stream { fill: none; stroke: #aad3df; stroke-linejoin: round; }
.street-case { fill: none; stroke: #c6c2be; stroke-width: 2.700; stroke-linecap: round; }
.street { fill: none; stroke: #fff; stroke-width: 1.800; stroke-linecap: round; }
.line { fill: none; stroke-linejoin: round; stroke-linecap: round; }
.minor-case { stroke: #c4c0bc; }
.white { stroke: #fff; }
.yellow-case { stroke: #c4c47c; }
path.line.yellow { stroke: #f4f7b4; }
circle.yellow { fill: #f4f7ad; }
.center-dash { fill: none; stroke: #b9ae8c; stroke-width: 1; stroke-dasharray: 5 3; }
.orange-case { stroke: #c99a57; }
path.line.orange { stroke: #fcd6a4; }
circle.orange { fill: #fcc98f; }
.trunk-case { stroke: #dd927c; }
path.line.trunk { stroke: #f9b29c; }
path.trunk:not(.line) { fill: #f9b29c; }
.rail { fill: none; stroke: #858080; stroke-width: 2.800; }
.rail-core { fill: none; stroke: #c9c9c9; stroke-width: 1; stroke-dasharray: 7 7; }
.dark-dash { fill: none; stroke: #77504b; stroke-width: .8; stroke-dasharray: 5 4; opacity: .7; }
.ring-base { fill: none; stroke: #fff; stroke-width: 4.500; opacity: .9; }
.ring { fill: none; stroke: #e892a2; stroke-width: 4.500; stroke-dasharray: 5 4; }
.bound { fill: none; stroke: #ac8fb3; opacity: .7; stroke-linejoin: round; }
.bound-core { fill: none; stroke: #896d91; stroke-width: 1; stroke-dasharray: 8 2; opacity: .7; }
.dash { fill: none; stroke: #8d719b; stroke-width: 1.200; stroke-dasharray: 6 2 2 2; opacity: .65; }
.ferry { fill: none; stroke: #6666ff; stroke-width: 1; stroke-dasharray: 6 5; }
.hospital { fill: none; stroke: #0092da; stroke-width: 1.500; }
.shield { fill: #f3f3c9; stroke: #c0c080; }
.ref { fill: #3d3d22; font-family: "Noto Sans", sans-serif; }
.label { fill: #222; font-family: "Noto Sans", sans-serif; text-anchor: middle; paint-order: stroke; stroke: rgba(255, 255, 255, .7); stroke-width: 2px; stroke-linejoin: round; }
.zone { fill: #734a77; font-style: italic; }
.estate { fill: #666; font-style: italic; }
.river { fill: #4d80b3; font-style: italic; stroke-width: 1px; }
.road { fill: #111; stroke-width: .600px; stroke: rgba(255, 255, 255, .4); }
</style>
